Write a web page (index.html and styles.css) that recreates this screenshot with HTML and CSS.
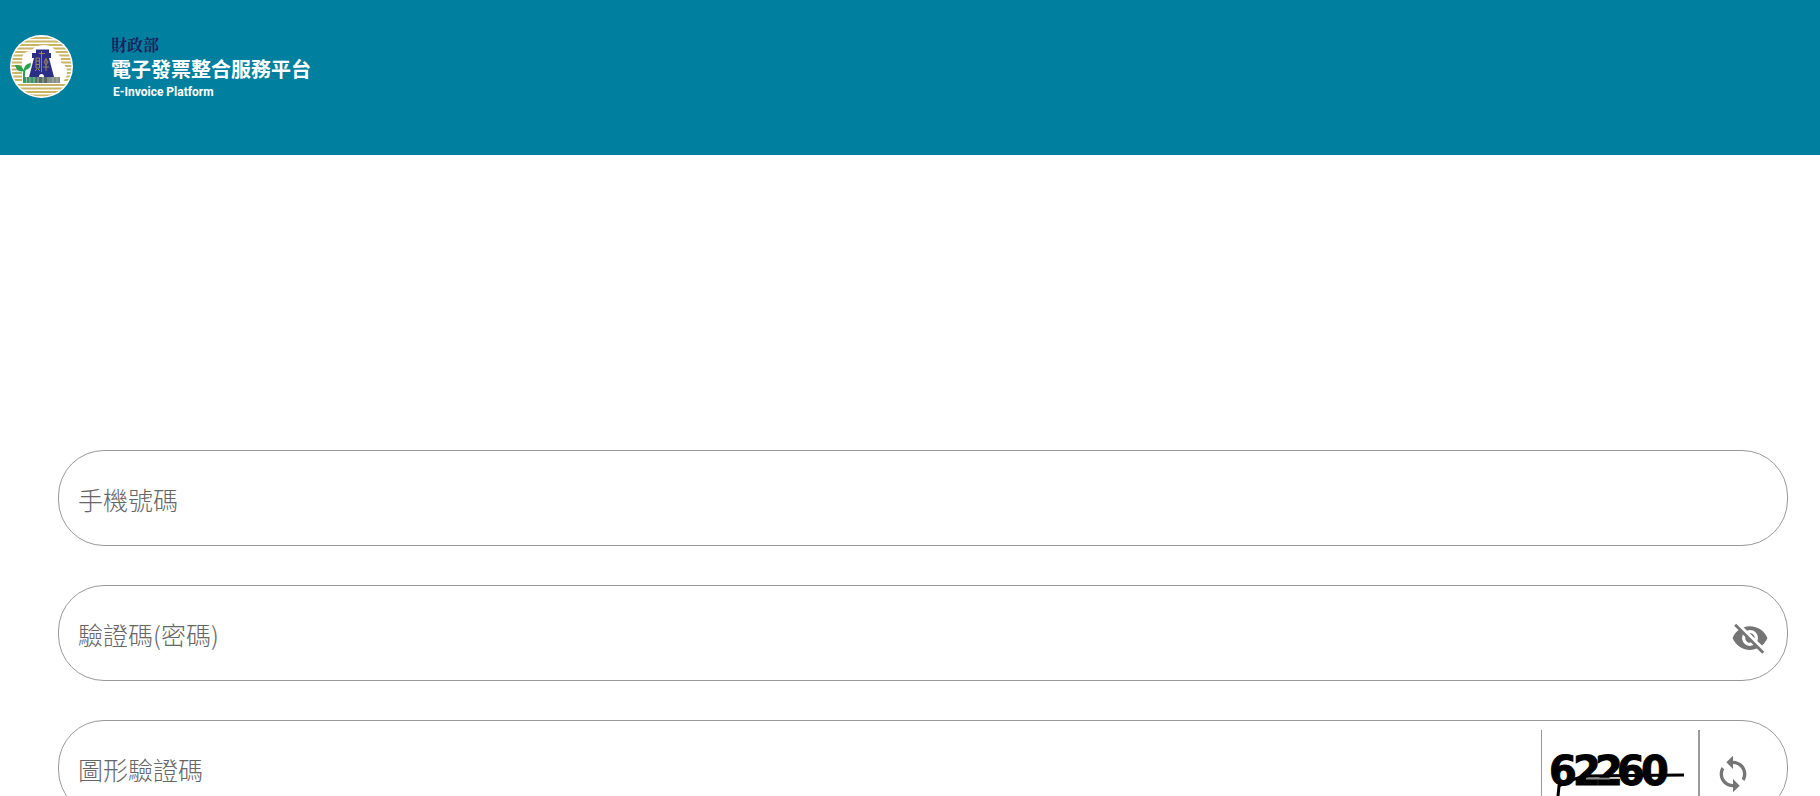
FILE: index.html
```html
<!DOCTYPE html>
<html lang="zh-Hant">
<head>
    <meta charset="utf-8">
    <title>電子發票整合服務平台</title>
    <meta name="viewport" content="width=device-width, initial-scale=1.0">
    <link rel="stylesheet" href="styles.css">
</head>
<body>
    <header class="header">
        <svg class="logo" viewBox="0 0 63 63" aria-hidden="true">
            <defs>
                <clipPath id="disc"><circle cx="31.5" cy="31.5" r="30"/></clipPath>
            </defs>
            <circle cx="31.5" cy="31.5" r="31.5" fill="#fff"/>
            <g clip-path="url(#disc)">
                <path d="M0 3H63M0 6.5H63M0 10H63M0 13.5H63M0 17H63M0 20.5H63M0 24H63M0 27.5H63M0 31H63M0 34.5H63M0 38H63M0 41.5H63M0 45H63M0 50H63M0 53.5H63M0 57H63M0 60.5H63" stroke="#c9b565" stroke-width="2"/>
            </g>
            <path d="M12 48V25Q12 16 21 16Q25 10 34 10Q44 10 46 18Q52 20 51 28Q57 30 57 37Q57 45 50 48Z" fill="#fff"/>
            <path d="M26 14.5H39V18H41V23H39L44 42H34Q34 39 31.5 39Q29 39 29 42H19L24 23H22V18H26Z" fill="#2b2e86"/>
            <path d="M31.5 16V37M29 18.5H35M26 23H29.5V33H26ZM26 26H29M26 29.5H29M25 36L27 34M30 36L28 34M36 23V36M34 27L36 24L38 27L36 30L34 27M33 32H39" fill="none" stroke="#9a8558" stroke-width="1"/>
            <path d="M26 42H50V48H26Z" fill="#8a8f8a"/>
            <path d="M26 42H39V48H26Z" fill="#5c6862"/>
            <path d="M13 42H26V48H13Z" fill="#3b9366"/>
            <path d="M16.5 42V48M20 42V48M24 42V48M28 42V48M33 42V48M38 42V48M43 42V48M47 42V48" stroke="#a4b5aa" stroke-width="1"/>
            <path d="M14 47V38Q14 34 17 32" fill="none" stroke="#29a04a" stroke-width="2"/>
            <path d="M5 30Q12 29 14 36Q7 38 5 30ZM14 35Q14 29 21 28Q21 35 14 35Z" fill="#29a04a"/>
        </svg>
        <div class="brand">
            <span class="brand-org">財政部</span>
            <span class="brand-name">電子發票整合服務平台</span>
            <span class="brand-en">E-Invoice Platform</span>
        </div>
    </header>

    <form class="login-form">
        <div class="field">
            <label for="mobile">手機號碼</label>
            <input type="text" id="mobile">
        </div>
        <div class="field">
            <label for="password">驗證碼(密碼)</label>
            <input type="password" id="password">
            <button type="button" class="icon-btn eye-btn" aria-label="顯示密碼">
                <svg viewBox="0 0 24 24"><path d="M12 7c2.760 0 5 2.240 5 5 0 .65-.13 1.260-.36 1.830l2.920 2.920c1.510-1.260 2.700-2.890 3.430-4.750-1.730-4.390-6-7.500-11-7.500-1.400 0-2.740.25-3.980.7l2.160 2.160C10.740 7.130 11.350 7 12 7zM2 4.270l2.280 2.280.46.46C3.080 8.300 1.780 10.020 1 12c1.730 4.390 6 7.500 11 7.500 1.550 0 3.030-.3 4.380-.84l.42.42L19.730 22 21 20.730 3.270 3 2 4.270zM7.530 9.800l1.550 1.550c-.05.21-.08.43-.08.65 0 1.660 1.340 3 3 3 .22 0 .44-.03.65-.08l1.550 1.550c-.67.33-1.410.53-2.200.53-2.760 0-5-2.240-5-5 0-.79.2-1.530.53-2.200zm4.310-.78l3.150 3.150.02-.16c0-1.660-1.340-3-3-3l-.17.01z"/></svg>
            </button>
        </div>
        <div class="field">
            <label for="captcha">圖形驗證碼</label>
            <input type="text" id="captcha">
            <div class="captcha">
                <svg viewBox="0 0 156 76">
                    <text class="captcha-text" x="7 31 53 75 99" y="55">62260</text>
                    <path d="M44 48.5H68" stroke="#888" stroke-width="2"/>
                    <path d="M15 76L17 56Q32 48 44 46L142 45" fill="none" stroke="#000" stroke-width="3"/>
                </svg>
            </div>
            <button type="button" class="icon-btn refresh-btn" aria-label="更新驗證碼">
                <svg viewBox="0 0 24 24"><path d="M12 4V1L8 5l4 4V6c3.310 0 6 2.690 6 6 0 1.010-.25 1.970-.7 2.800l1.460 1.460C19.540 15.030 20 13.570 20 12c0-4.420-3.580-8-8-8zm0 14c-3.310 0-6-2.690-6-6 0-1.010.25-1.970.7-2.800L5.240 7.740C4.460 8.970 4 10.430 4 12c0 4.420 3.580 8 8 8v3l4-4-4-4v3z"/></svg>
            </button>
        </div>
    </form>
</body>
</html>
```
FILE: styles.css
```css
* {
    box-sizing: border-box;
}

body {
    margin: 0;
    background: #fff;
    font-family: Roboto, "Noto Sans CJK TC", sans-serif;
}

.header {
    display: flex;
    align-items: flex-start;
    gap: 38px;
    padding: 35px 10px 57px;
    background: #007f9f;
}

.logo {
    width: 63px;
    height: 63px;
}

.brand {
    display: flex;
    flex-direction: column;
    color: #fff;
    font-weight: 700;
}

.brand-org {
    color: #1b1f5e;
    font-family: "Noto Serif CJK TC", "Noto Sans CJK TC", serif;
    font-size: 16px;
    line-height: 19px;
}

.brand-name {
    font-size: 20px;
    line-height: 32px;
}

.brand-en {
    padding-left: 2px;
    font-size: 12px;
    line-height: 12px;
}

.login-form {
    display: flex;
    flex-direction: column;
    gap: 39px;
    padding: 295px 32px 40px 58px;
}

.field {
    display: flex;
    align-items: center;
    height: 96px;
    padding: 0 18px 0 19px;
    border: 1px solid #999;
    border-radius: 46px;
}

.field label {
    padding-top: 2px;
    color: #666;
    font-family: "Noto Sans CJK TC", sans-serif;
    font-size: 25px;
    font-weight: 300;
    line-height: 36px;
}

.field input {
    flex: 1;
    min-width: 0;
    height: 60px;
    border: none;
    outline: none;
    background: transparent;
    font-size: 25px;
}

.icon-btn {
    display: flex;
    padding: 10px 0 0;
    border: none;
    background: none;
    cursor: pointer;
}

.icon-btn svg {
    width: 38px;
    height: 38px;
    fill: #757575;
}

.captcha {
    height: 76px;
    border-left: 1px solid #999;
    border-right: 2px solid #999;
}

.captcha svg {
    display: block;
    width: 156px;
    height: 76px;
}

.captcha-text {
    font-family: "DejaVu Sans", sans-serif;
    font-size: 40px;
    font-weight: 700;
    stroke: #000;
    stroke-width: 1px;
}

.refresh-btn {
    padding: 12px 16px 0 13px;
}

.refresh-btn svg {
    width: 40px;
    height: 40px;
}
```
